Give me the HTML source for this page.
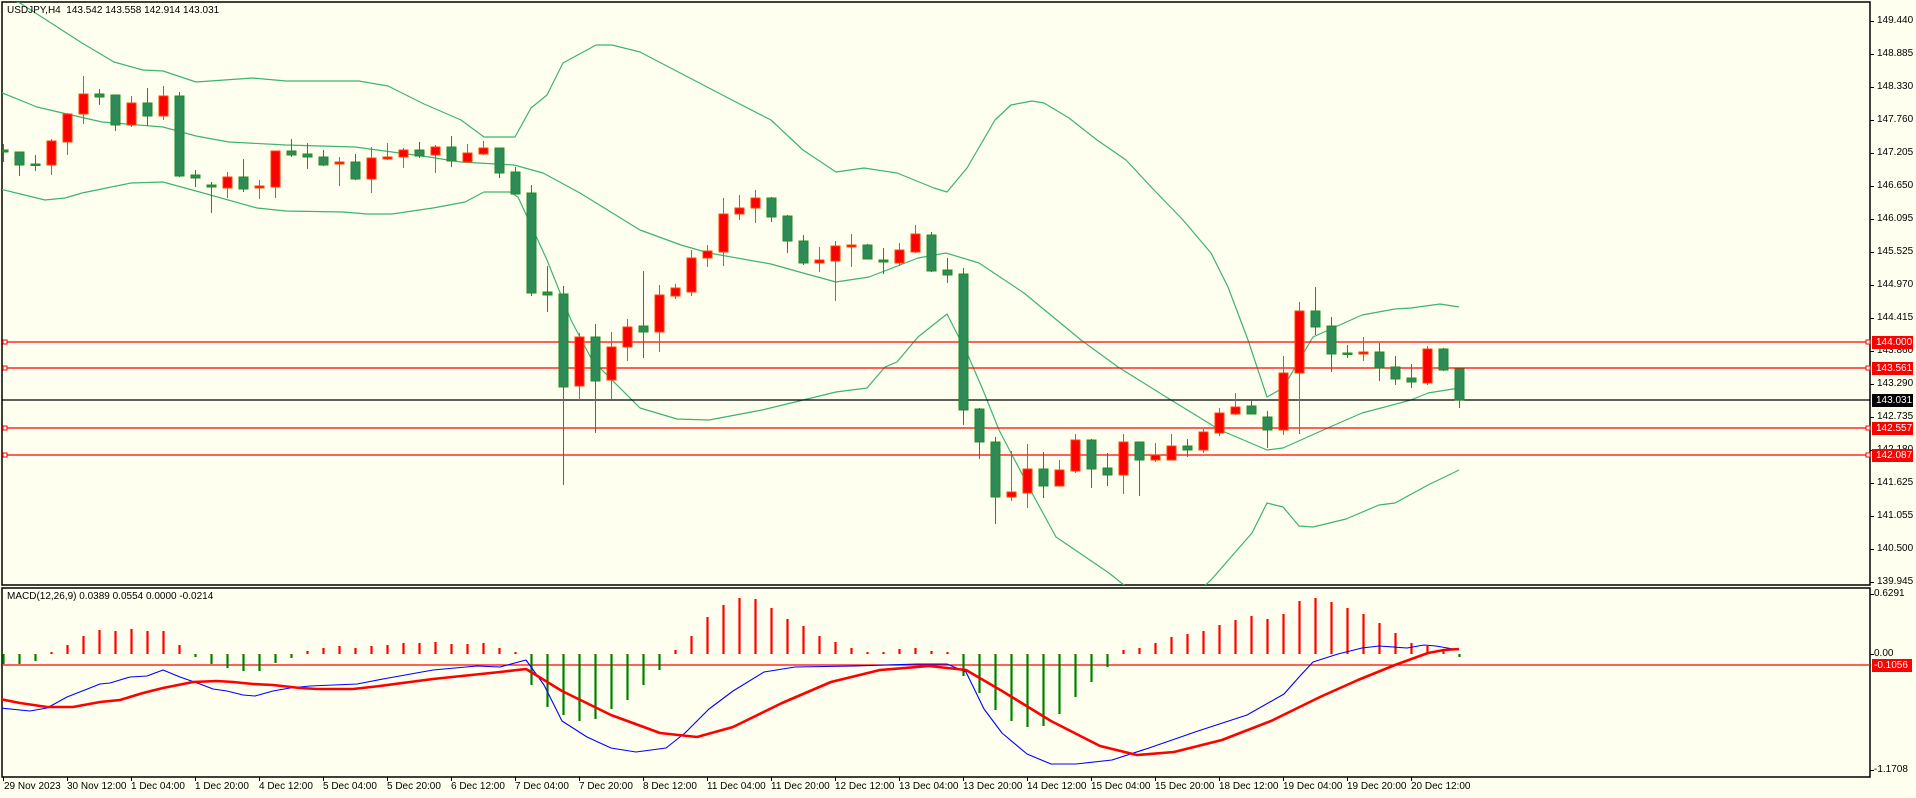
<!DOCTYPE html>
<html><head><meta charset="utf-8">
<style>
html,body{margin:0;padding:0;background:#FFFFF0;}
body{width:1916px;height:798px;position:relative;overflow:hidden;font-family:"Liberation Sans",sans-serif;font-size:10px;color:#000;}
.t{position:absolute;white-space:nowrap;line-height:12px;}
.ax{position:absolute;left:1877px;white-space:nowrap;line-height:12px;}
.box{position:absolute;left:1872px;width:41px;height:13px;background:#FF0000;color:#fff;line-height:13px;padding-left:4px;box-sizing:border-box;}
.date{position:absolute;top:781px;white-space:nowrap;}
</style></head><body>
<svg id="s" width="1916" height="798" style="position:absolute;left:0;top:0" xmlns="http://www.w3.org/2000/svg">
<defs><clipPath id="cm"><rect x="2" y="2" width="1868" height="583"/></clipPath>
<clipPath id="cd"><rect x="2" y="588" width="1868" height="189"/></clipPath></defs>
<rect x="2" y="2" width="1868" height="583" fill="none" stroke="#000" stroke-width="1.5"/>
<rect x="2" y="588" width="1868" height="189" fill="none" stroke="#000" stroke-width="1.5"/>
<g id="bands" clip-path="url(#cm)" fill="none" stroke="#3CB371" stroke-width="1.2"></g>
<line x1="2" y1="400" x2="1870" y2="400" stroke="#000" stroke-width="1.2"/>
<g stroke="#FF0000" stroke-width="1.3">
<line x1="2" y1="342" x2="1870" y2="342"/><line x1="2" y1="368" x2="1870" y2="368"/>
<line x1="2" y1="428" x2="1870" y2="428"/><line x1="2" y1="455" x2="1870" y2="455"/>
<line x1="2" y1="665" x2="1870" y2="665"/>
</g>
<g fill="#fff" stroke="#FF0000" stroke-width="1">
<rect x="3" y="340" width="4" height="4"/><rect x="3" y="366" width="4" height="4"/><rect x="3" y="426" width="4" height="4"/><rect x="3" y="453" width="4" height="4"/>
<rect x="1866" y="340" width="4" height="4"/><rect x="1866" y="366" width="4" height="4"/><rect x="1866" y="426" width="4" height="4"/><rect x="1866" y="453" width="4" height="4"/>
</g>
<g id="candles" clip-path="url(#cm)"></g>
<g id="macd" clip-path="url(#cd)"></g>
<g id="ticks" stroke="#000" stroke-width="1"></g>
</svg>

<div class="t" style="left:7px;top:5px">USDJPY,H4&nbsp; 143.542 143.558 142.914 143.031</div>
<div class="t" style="left:7px;top:591px">MACD(12,26,9) 0.0389 0.0554 0.0000 -0.0214</div>

<div class="ax" style="top:15px">149.440</div>
<div class="ax" style="top:48px">148.885</div>
<div class="ax" style="top:81px">148.330</div>
<div class="ax" style="top:114px">147.760</div>
<div class="ax" style="top:147px">147.205</div>
<div class="ax" style="top:180px">146.650</div>
<div class="ax" style="top:213px">146.095</div>
<div class="ax" style="top:246px">145.525</div>
<div class="ax" style="top:279px">144.970</div>
<div class="ax" style="top:312px">144.415</div>
<div class="ax" style="top:345px">143.860</div>
<div class="ax" style="top:378px">143.290</div>
<div class="ax" style="top:411px">142.735</div>
<div class="ax" style="top:444px">142.180</div>
<div class="ax" style="top:477px">141.625</div>
<div class="ax" style="top:510px">141.055</div>
<div class="ax" style="top:543px">140.500</div>
<div class="ax" style="top:576px">139.945</div>
<div class="box" style="top:336px">144.000</div>
<div class="box" style="top:362px">143.561</div>
<div class="box" style="top:394px;background:#000">143.031</div>
<div class="box" style="top:422px">142.557</div>
<div class="box" style="top:449px">142.087</div>
<div class="ax" style="top:588px;left:1874px">0.6291</div>
<div class="ax" style="top:648px;left:1874px">0.00</div>
<div class="box" style="top:659px;width:40px;padding-left:2px">-0.1056</div>
<div class="ax" style="top:764px;left:1874px">-1.1708</div>

<div class="date" style="left:4px">29 Nov 2023</div>
<div class="date" style="left:67px">30 Nov 12:00</div>
<div class="date" style="left:131px">1 Dec 04:00</div>
<div class="date" style="left:195px">1 Dec 20:00</div>
<div class="date" style="left:259px">4 Dec 12:00</div>
<div class="date" style="left:323px">5 Dec 04:00</div>
<div class="date" style="left:387px">5 Dec 20:00</div>
<div class="date" style="left:451px">6 Dec 12:00</div>
<div class="date" style="left:515px">7 Dec 04:00</div>
<div class="date" style="left:579px">7 Dec 20:00</div>
<div class="date" style="left:643px">8 Dec 12:00</div>
<div class="date" style="left:707px">11 Dec 04:00</div>
<div class="date" style="left:771px">11 Dec 20:00</div>
<div class="date" style="left:835px">12 Dec 12:00</div>
<div class="date" style="left:899px">13 Dec 04:00</div>
<div class="date" style="left:963px">13 Dec 20:00</div>
<div class="date" style="left:1027px">14 Dec 12:00</div>
<div class="date" style="left:1091px">15 Dec 04:00</div>
<div class="date" style="left:1155px">15 Dec 20:00</div>
<div class="date" style="left:1219px">18 Dec 12:00</div>
<div class="date" style="left:1283px">19 Dec 04:00</div>
<div class="date" style="left:1347px">19 Dec 20:00</div>
<div class="date" style="left:1411px">20 Dec 12:00</div>

<script>
var NS="http://www.w3.org/2000/svg";
function el(p,t,a){var e=document.createElementNS(NS,t);for(var k in a)e.setAttribute(k,a[k]);p.appendChild(e);return e;}
var C=[
['g',150,152,144,162],['g',152,165,152,176],['g',164,165,155,171],['r',141,165,139,175],['r',114,142,113,155],
['r',94,114,76,124],['g',94,97,89,105],['g',95,125,95,131],['r',103,125,96,127],['g',103,116,88,126],
['r',96,116,86,120],['g',96,176,92,177],['g',175,178,170,187],['g',185,187,182,213],['r',177,188,172,198],
['g',177,189,159,192],['r',186,188,180,199],['r',151,187,151,198],['g',151,155,139,157],['g',154,157,143,169],
['g',157,165,150,166],['r',162,164,157,186],['g',162,179,154,180],['r',158,179,147,193],['r',157,159,143,160],
['r',150,157,148,168],['g',150,156,142,158],['r',147,155,145,173],['g',147,161,136,167],['r',153,162,144,163],
['r',148,154,141,155],['g',148,173,148,178],['g',172,194,167,194],['g',193,293,185,296],['g',292,295,266,312],
['g',294,387,286,485],['r',337,386,333,400],['g',337,381,324,433],['r',347,380,332,399],['r',327,347,319,361],
['g',326,332,271,358],['r',295,332,285,352],['r',288,296,284,299],['r',258,292,250,296],['r',251,258,245,267],
['r',214,252,198,266],['r',208,214,195,220],['r',198,208,190,223],['g',198,217,197,222],['g',216,241,215,253],
['g',241,263,235,265],['r',260,263,247,272],['r',246,261,241,301],['r',245,247,234,267],['g',245,259,244,259],
['g',260,262,248,274],['r',250,263,243,266],['r',234,252,225,253],['g',235,271,232,272],['g',270,275,258,283],
['g',274,410,268,425],['g',409,442,408,459],['g',442,497,437,524],['r',492,497,451,501],['r',469,493,444,508],
['g',469,486,452,498],['r',470,486,460,486],['r',440,471,434,473],['g',440,469,439,488],['g',468,475,453,486],
['r',442,475,434,494],['g',442,460,442,496],['r',455,460,443,462],['r',446,460,434,460],['g',446,450,439,457],
['r',432,450,429,453],['r',413,433,408,436],['r',407,414,393,415],['g',406,414,401,414],['g',417,430,411,448],
['r',373,430,356,435],['r',311,373,302,434],['g',311,327,287,335],['g',326,354,317,372],['g',353,354,345,358],
['r',352,354,337,361],['g',352,368,343,381],['g',367,379,356,385],['g',378,382,364,388],['r',349,383,346,385],
['g',349,370,348,371],['g',369,400,369,408]];
var cg=document.getElementById('candles');
C.forEach(function(c,i){var x=3+16*i;var red=c[0]=='r';
 el(cg,'line',{x1:x+.5,x2:x+.5,y1:c[3],y2:c[4],stroke:red?'#FF4500':'#228B22','stroke-width':1});
 var h=Math.max(c[2]-c[1],1.5);
 el(cg,'rect',{x:x-4,y:c[1],width:9,height:h,fill:red?'#FF0000':'#2E8B57',stroke:red?'#FF4500':'#228B22','stroke-width':1});
});
function pl(g,pts,st,w){el(g,'polyline',{points:pts.map(function(p){return p.join(',')}).join(' '),fill:'none',stroke:st,'stroke-width':w,'stroke-linejoin':'round'});}
var bg=document.getElementById('bands');
pl(bg,[[0,-5],[20,3],[82,43],[114,62],[143,70],[163,71],[196,82],[253,78],[286,81],[359,81],[388,86],[424,104],[461,120],[484,137],[515,137],[531,108],[547,95],[563,63],[596,45],[612,45],[640,52],[732,100],[771,120],[803,150],[836,172],[864,168],[897,173],[934,188],[947,192],[967,168],[995,120],[1011,105],[1032,101],[1044,103],[1069,118],[1097,140],[1126,160],[1154,190],[1183,220],[1211,253],[1228,287],[1248,340],[1267,397],[1283,388],[1313,337],[1362,315],[1395,309],[1411,308],[1440,304],[1459,307]],'#3CB371',1.2);
pl(bg,[[0,92],[37,107],[67,114],[102,122],[163,127],[196,136],[229,142],[286,145],[355,147],[429,157],[461,162],[514,165],[543,173],[580,193],[640,230],[681,245],[709,253],[771,264],[803,273],[836,282],[869,277],[918,258],[946,253],[979,263],[1024,293],[1081,340],[1118,367],[1171,400],[1220,430],[1267,450],[1283,448],[1330,427],[1362,413],[1411,400],[1428,393],[1459,388]],'#3CB371',1.2);
pl(bg,[[0,189],[45,200],[65,198],[82,193],[131,183],[163,182],[196,191],[257,208],[286,211],[343,212],[367,214],[392,214],[433,208],[465,202],[484,192],[510,192],[518,197],[547,260],[571,320],[592,360],[640,408],[677,419],[709,420],[762,410],[795,402],[836,392],[867,388],[885,367],[897,362],[918,337],[947,314],[967,353],[983,390],[999,430],[1032,493],[1056,537],[1109,573],[1130,590],[1200,590],[1211,580],[1252,533],[1267,503],[1283,507],[1299,526],[1313,527],[1346,519],[1379,505],[1395,503],[1428,485],[1459,470]],'#3CB371',1.2);
var H=[664,664,661,652,645,636,630,631,629,631,631,645,657,664,668,671,671,663,658,651,648,646,648,646,645,643,643,642,644,644,643,648,652,
685,707,715,721,719,709,700,685,670,
650,636,617,605,598,599,608,619,626,636,642,648,652,652,649,648,651,652,
676,693,710,721,727,726,714,697,682,667,
650,648,643,637,634,631,625,620,616,619,614,601,598,602,608,614,623,633,643,646,651,657];
var greens={0:1,1:1,2:1,12:1,13:1,14:1,15:1,16:1,17:1,18:1,91:1};
for(var i=33;i<=41;i++)greens[i]=1;for(var i=60;i<=69;i++)greens[i]=1;
var mg=document.getElementById('macd');
H.forEach(function(v,i){var x=3+16*i+.5;var g=greens[i];
 el(mg,'line',{x1:x,x2:x,y1:Math.min(654,v),y2:Math.max(654,v),stroke:g?'#008000':'#FF0000','stroke-width':2.2});});
pl(mg,[[0,708],[30,711],[47,708],[67,697],[100,684],[110,683],[130,677],[147,676],[163,670],[180,677],[200,684],[213,689],[227,691],[243,695],[255,696],[273,691],[290,688],[310,686],[357,684],[383,679],[433,670],[477,666],[500,667],[526,660],[544,685],[562,721],[587,737],[611,748],[636,752],[666,748],[685,733],[709,709],[733,691],[764,672],[795,667],[856,666],[917,664],[947,664],[966,672],[984,709],[1002,733],[1027,754],[1051,764],[1076,764],[1112,760],[1149,748],[1198,731],[1247,715],[1284,694],[1300,676],[1313,662],[1338,654],[1362,648],[1379,646],[1407,648],[1424,645],[1436,646],[1459,650]],'#0000FF',1.1);
pl(mg,[[0,699],[20,703],[47,707],[73,707],[100,702],[120,700],[143,693],[163,688],[193,682],[217,681],[233,682],[253,684],[273,685],[300,688],[317,689],[353,689],[380,686],[433,679],[500,672],[526,669],[562,691],[611,715],[660,733],[697,737],[733,727],[782,703],[831,682],[880,670],[929,666],[966,670],[1002,691],[1051,721],[1100,746],[1137,755],[1174,752],[1222,740],[1271,721],[1320,697],[1358,680],[1395,665],[1428,653],[1444,650],[1459,649]],'#FF0000',2.6);
var tg=document.getElementById('ticks');
[21,54,87,120,153,186,219,252,285,318,351,384,417,450,483,516,549,582,594,654,770].forEach(function(y){el(tg,'line',{x1:1870,x2:1874,y1:y+.5,y2:y+.5});});
for(var k=0;k<23;k++){var x=3+64*k+.5;el(tg,'line',{x1:x,x2:x,y1:777,y2:781});}
</script>
</body></html>
